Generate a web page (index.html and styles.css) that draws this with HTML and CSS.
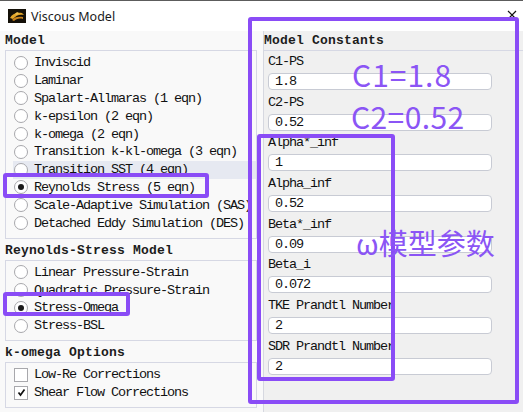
FILE: index.html
```html
<!DOCTYPE html>
<html lang="zh-CN">
<head>
    <meta charset="UTF-8">
    <title>Viscous Model</title>
    <link rel="stylesheet" href="styles.css">
</head>
<body>
<div class="window">
    <div class="titlebar">
        <svg class="app-icon" width="18" height="14" viewBox="0 0 18 14">
            <rect width="18" height="14" fill="#141008"/>
            <path d="M2 9 C4 5 8 3 14 4 L16 6 C12 5 8 6 5 10 Z" fill="#e3a62a"/>
            <path d="M4 11 C6 8 10 7 15 8 L15 10 C11 9 8 10 6 12 Z" fill="#c9821c"/>
            <path d="M7 5 L9 3 L11 4 L9 6 Z" fill="#f0c050"/>
        </svg>
        <span class="title">Viscous Model</span>
        <svg class="close-btn" width="10" height="10" viewBox="0 0 10 10">
            <path d="M1 1 L9 9 M9 1 L1 9" stroke="#111" stroke-width="1.2"/>
        </svg>
    </div>

    <div class="main">
        <div class="left-pane">
            <div class="group-title">Model</div>
            <div class="group-box model-box">
                <div class="option"><span class="radio"></span>Inviscid</div>
                <div class="option"><span class="radio"></span>Laminar</div>
                <div class="option"><span class="radio"></span>Spalart-Allmaras (1 eqn)</div>
                <div class="option"><span class="radio"></span>k-epsilon (2 eqn)</div>
                <div class="option"><span class="radio"></span>k-omega (2 eqn)</div>
                <div class="option"><span class="radio"></span>Transition k-kl-omega (3 eqn)</div>
                <div class="option hover"><span class="radio"></span>Transition SST (4 eqn)</div>
                <div class="option"><span class="radio checked"></span>Reynolds Stress (5 eqn)</div>
                <div class="option"><span class="radio"></span>Scale-Adaptive Simulation (SAS)</div>
                <div class="option"><span class="radio"></span>Detached Eddy Simulation (DES)</div>
            </div>

            <div class="group-title">Reynolds-Stress Model</div>
            <div class="group-box rsm-box">
                <div class="option"><span class="radio"></span>Linear Pressure-Strain</div>
                <div class="option"><span class="radio"></span>Quadratic Pressure-Strain</div>
                <div class="option"><span class="radio checked"></span>Stress-Omega</div>
                <div class="option"><span class="radio"></span>Stress-BSL</div>
            </div>

            <div class="group-title">k-omega Options</div>
            <div class="group-box options-box">
                <div class="option check-row"><span class="checkbox"></span>Low-Re Corrections</div>
                <div class="option check-row">
                    <span class="checkbox">
                        <svg width="11" height="11" viewBox="0 0 11 11"><path d="M2.5 5.5 L4.5 8 L8.5 2.5" fill="none" stroke="#111" stroke-width="1.7"/></svg>
                    </span>Shear Flow Corrections
                </div>
            </div>
        </div>

        <div class="right-pane">
            <div class="group-title">Model Constants</div>
            <div class="group-box constants-box">
                <div class="field"><div class="field-label">C1-PS</div><div class="num-input">1.8</div></div>
                <div class="field"><div class="field-label">C2-PS</div><div class="num-input">0.52</div></div>
                <div class="field"><div class="field-label">Alpha*_inf</div><div class="num-input">1</div></div>
                <div class="field"><div class="field-label">Alpha_inf</div><div class="num-input">0.52</div></div>
                <div class="field"><div class="field-label">Beta*_inf</div><div class="num-input">0.09</div></div>
                <div class="field"><div class="field-label">Beta_i</div><div class="num-input">0.072</div></div>
                <div class="field"><div class="field-label">TKE Prandtl Number</div><div class="num-input">2</div></div>
                <div class="field"><div class="field-label">SDR Prandtl Number</div><div class="num-input">2</div></div>
            </div>
        </div>
    </div>

    <!-- пометки поверх окна -->
    <div class="mark mark-constants"></div>
    <div class="mark mark-omega"></div>
    <div class="mark mark-rs"></div>
    <div class="mark mark-so"></div>
    <div class="note note-c1">C1=1.8</div>
    <div class="note note-c2">C2=0.52</div>
    <div class="note note-omega">ω模型参数</div>
</div>
</body>
</html>
```

FILE: styles.css
```css
body {
    margin: 0;
    background: #f0f0f0;
}

.window {
    position: relative;
    width: 523px;
    height: 412px;
    overflow: hidden;
    font-family: "Liberation Mono", "DejaVu Sans Mono", monospace;
    font-size: 13.5px;
    color: #111;
}

/* заголовок окна */
.titlebar {
    position: relative;
    height: 30px;
    border-top: 1px solid #5c5c5c;
    background: #ffffff;
    display: flex;
    align-items: center;
    padding-left: 8px;
}
.app-icon {
    margin-right: 5px;
}
.title {
    font-family: "Noto Sans", "Liberation Sans", sans-serif;
    font-size: 12.5px;
    color: #1a1a1a;
}
.close-btn {
    position: absolute;
    right: 6px;
    top: 9px;
}

.main {
    display: flex;
    height: 381px;
}

.left-pane {
    width: 258px;
    padding-left: 5px;
    background: #f9f9f9;
}
.right-pane {
    flex: 1;
    background: #f0f0f0;
    border-left: 1px solid #d6d8e0;
}

.group-title {
    font-size: 13px;
    font-weight: bold;
    letter-spacing: 0.2px;
    height: 18px;
    line-height: 18px;
    padding-top: 1px;
    color: #1c1c1c;
}
.left-pane .group-title + .group-box {
    margin-bottom: 2px;
}

.group-box {
    border: 1px solid #d6d8e4;
}
.model-box {
    padding: 3px 0 6px;
    margin-right: 6px;
}
.rsm-box {
    padding: 2.5px 0 5px;
    margin-right: 6px;
}
.options-box {
    padding: 3px 0 5px;
    margin-right: 6px;
}

.option {
    display: flex;
    align-items: center;
    height: 17.8px;
    margin-left: 7px;
    padding-left: 1px;
    letter-spacing: -1.1px;
    white-space: nowrap;
}
.option.hover {
    background: #e6e9f1;
}
.check-row {
    height: 18px;
}

.radio {
    width: 12px;
    height: 12px;
    border: 1px solid #a8a8ac;
    border-radius: 50%;
    background: #ffffff;
    margin-right: 6px;
    display: flex;
    align-items: center;
    justify-content: center;
    flex-shrink: 0;
}
.radio.checked::after {
    content: "";
    width: 6px;
    height: 6px;
    border-radius: 50%;
    background: #1a1a1a;
}

.checkbox {
    width: 12px;
    height: 12px;
    border: 1px solid #a8a8ac;
    background: #ffffff;
    margin-right: 6px;
    display: flex;
    align-items: center;
    justify-content: center;
    flex-shrink: 0;
}

/* правая панель с константами */
.constants-box {
    border-left: none;
    border-right: none;
    border-bottom: none;
    padding-left: 4px;
}
.field {
    margin-bottom: 1.7px;
}
.field-label {
    height: 22px;
    line-height: 22px;
    letter-spacing: -1.1px;
    white-space: nowrap;
}
.num-input {
    width: 210px;
    height: 15px;
    line-height: 15px;
    border: 1px solid #c8cbd4;
    border-radius: 4px;
    background: #ffffff;
    padding-left: 6px;
    padding-right: 6px;
    letter-spacing: -1.1px;
}

/* фиолетовые рамки и подписи */
.mark {
    position: absolute;
    border: 4px solid #8a4cf6;
    border-radius: 3px;
    box-sizing: border-box;
}
.mark-constants {
    left: 248px;
    top: 17px;
    width: 271px;
    height: 387px;
}
.mark-omega {
    left: 257px;
    top: 134px;
    width: 138px;
    height: 247px;
}
.mark-rs {
    left: 3px;
    top: 173px;
    width: 206px;
    height: 25px;
}
.mark-so {
    left: 3px;
    top: 292px;
    width: 127px;
    height: 24px;
}

.note {
    position: absolute;
    font-family: "Noto Sans CJK SC", "Noto Sans", sans-serif;
    font-size: 30px;
    line-height: 30px;
    color: #8b55f5;
    white-space: nowrap;
}
.note-c1 {
    left: 352px;
    top: 59px;
    letter-spacing: 1px;
}
.note-c2 {
    left: 351px;
    top: 101px;
    letter-spacing: 0.4px;
}
.note-omega {
    left: 356px;
    top: 227px;
    font-size: 29px;
}
```
